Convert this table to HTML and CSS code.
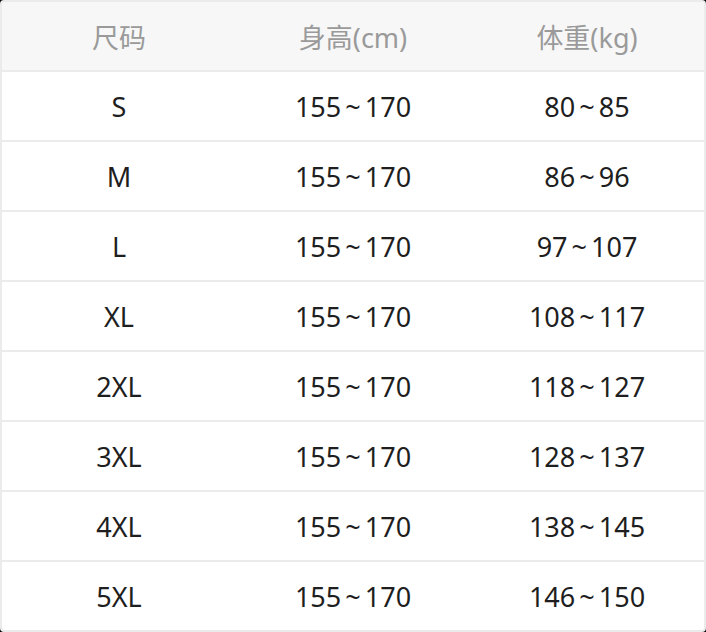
FILE: index.html
```html
<!DOCTYPE html>
<html lang="zh">
<head>
<meta charset="utf-8">
<link rel="stylesheet" href="styles.css">
</head>
<body>
<table class="size-table">
  <thead>
    <tr><th>尺码</th><th>身高(cm)</th><th>体重(kg)</th></tr>
  </thead>
  <tbody>
    <tr><td>S</td><td>155 ~ 170</td><td>80 ~ 85</td></tr>
    <tr><td>M</td><td>155 ~ 170</td><td>86 ~ 96</td></tr>
    <tr><td>L</td><td>155 ~ 170</td><td>97 ~ 107</td></tr>
    <tr><td>XL</td><td>155 ~ 170</td><td>108 ~ 117</td></tr>
    <tr><td>2XL</td><td>155 ~ 170</td><td>118 ~ 127</td></tr>
    <tr><td>3XL</td><td>155 ~ 170</td><td>128 ~ 137</td></tr>
    <tr><td>4XL</td><td>155 ~ 170</td><td>138 ~ 145</td></tr>
    <tr><td>5XL</td><td>155 ~ 170</td><td>146 ~ 150</td></tr>
  </tbody>
</table>
</body>
</html>
```
FILE: styles.css
```css
html, body {
  margin: 0;
  padding: 0;
  background: #000;
}
.size-table {
  width: 706px;
  border-collapse: separate;
  border-spacing: 0;
  border: 2px solid #ebebeb;
  border-radius: 4px;
  background: #fff;
  table-layout: fixed;
  font-family: "Noto Sans", "Noto Sans CJK SC", sans-serif;
  font-size: 27px;
  overflow: hidden;
}
.size-table th,
.size-table td {
  height: 68px;
  padding: 0;
  text-align: center;
  vertical-align: middle;
  font-weight: normal;
  color: #1e1e1e;
  border-top: 2px solid #ebebeb;
  word-spacing: -3px;
}
.size-table thead th {
  border-top: 0;
  background: #f7f7f7;
  color: #9a9a9a;
}
```
